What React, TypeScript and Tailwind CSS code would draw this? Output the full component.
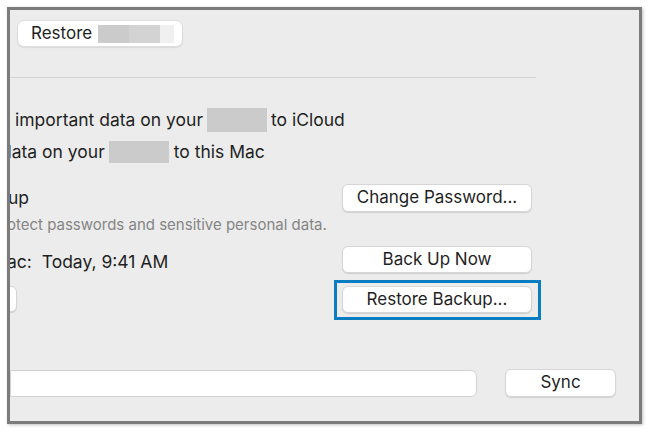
const btn =
  'flex items-center justify-center bg-white rounded-[6px] border border-[#d6d6d6] shadow-[0_1px_1px_rgba(0,0,0,0.12)] text-[17px] text-[#1f1f1f]';

function Redact({ className }: { className: string }) {
  return <span className={`inline-block bg-[#cbcbcb] align-middle ${className}`} />;
}

export default function App() {
  return (
    <div className="w-[650px] h-[433px] bg-white pt-[7px] pl-[7px] font-['Inter',sans-serif]">
      <div className="w-[635px] h-[417px] border-[3px] border-[#7b7b7b] bg-[#ececec] overflow-hidden shadow-[1px_1px_3px_rgba(0,0,0,0.25)]">
        {/* top toolbar */}
        <div className="pt-[10px] pl-[7px]">
          <div className="flex items-center w-[166px] h-[27px] bg-white rounded-[7px] border border-[#dedede] shadow-[0_1px_1px_rgba(0,0,0,0.08)] pl-[13px] text-[17px] text-[#1f1f1f]">
            Restore
            <span className="ml-[6px] inline-block w-[31px] h-[18px] bg-[#cbcbcb]" />
            <span className="inline-block w-[31px] h-[18px] bg-[#d3d3d3]" />
            <span className="inline-block w-[14px] h-[18px] bg-[#f0f0f0]" />
          </div>
        </div>
        <div className="mt-[30px] h-px w-[526px] bg-[#d2d2d2]" />

        {/* text rows */}
        <div className="mt-[30px] pl-[5px] h-[24px] flex items-center text-[17.5px] text-[#1f1f1f] whitespace-nowrap">
          important data on your
          <Redact className="mx-[4px] w-[60px] h-[24px]" />
          to iCloud
        </div>
        <div className="mt-[8px] -ml-[9px] h-[24px] flex items-center text-[17.5px] text-[#1f1f1f] whitespace-nowrap">
          data on your
          <Redact className="ml-[4px] mr-[5px] w-[60px] h-[22px]" />
          to this Mac
        </div>

        <div className="mt-[20px] grid grid-cols-[332px_190px] items-center h-[28px]">
          <div className="-ml-[2px] text-[17.5px] text-[#1f1f1f]">up</div>
          <div className={`${btn} h-[28px]`}>Change Password...</div>
        </div>
        <div className="mt-[4px] -ml-[3px] h-[18px] flex items-center text-[15px] text-[#858585] whitespace-nowrap">
          otect passwords and sensitive personal data.
        </div>

        <div className="mt-[10px] grid grid-cols-[332px_190px] items-center h-[27px]">
          <div className="-ml-[3px] pt-[5px] text-[17.5px] text-[#1f1f1f] whitespace-nowrap">
            ac:&nbsp; Today, 9:41 AM
          </div>
          <div className={`${btn} h-[27px]`}>Back Up Now</div>
        </div>

        <div className="mt-[9px] grid grid-cols-[324px_207px] items-start">
          <div className="mt-[6px] -ml-[53px] w-[60px] h-[26px] bg-white rounded-[6px] border border-[#d6d6d6] shadow-[0_1px_1px_rgba(0,0,0,0.12)]" />
          <div className="h-[40px] border-[3px] border-[#0a7cc2] pt-[3px] pl-[5px]">
            <div className={`${btn} w-[190px] h-[27px]`}>Restore Backup...</div>
          </div>
        </div>

        <div className="mt-[49px] flex items-center">
          <div className="w-[467px] h-[27px] bg-white rounded-r-[6px] border border-[#d2d2d2]" />
          <div className={`${btn} ml-[28px] w-[111px] h-[28px]`}>Sync</div>
        </div>
      </div>
    </div>
  );
}
